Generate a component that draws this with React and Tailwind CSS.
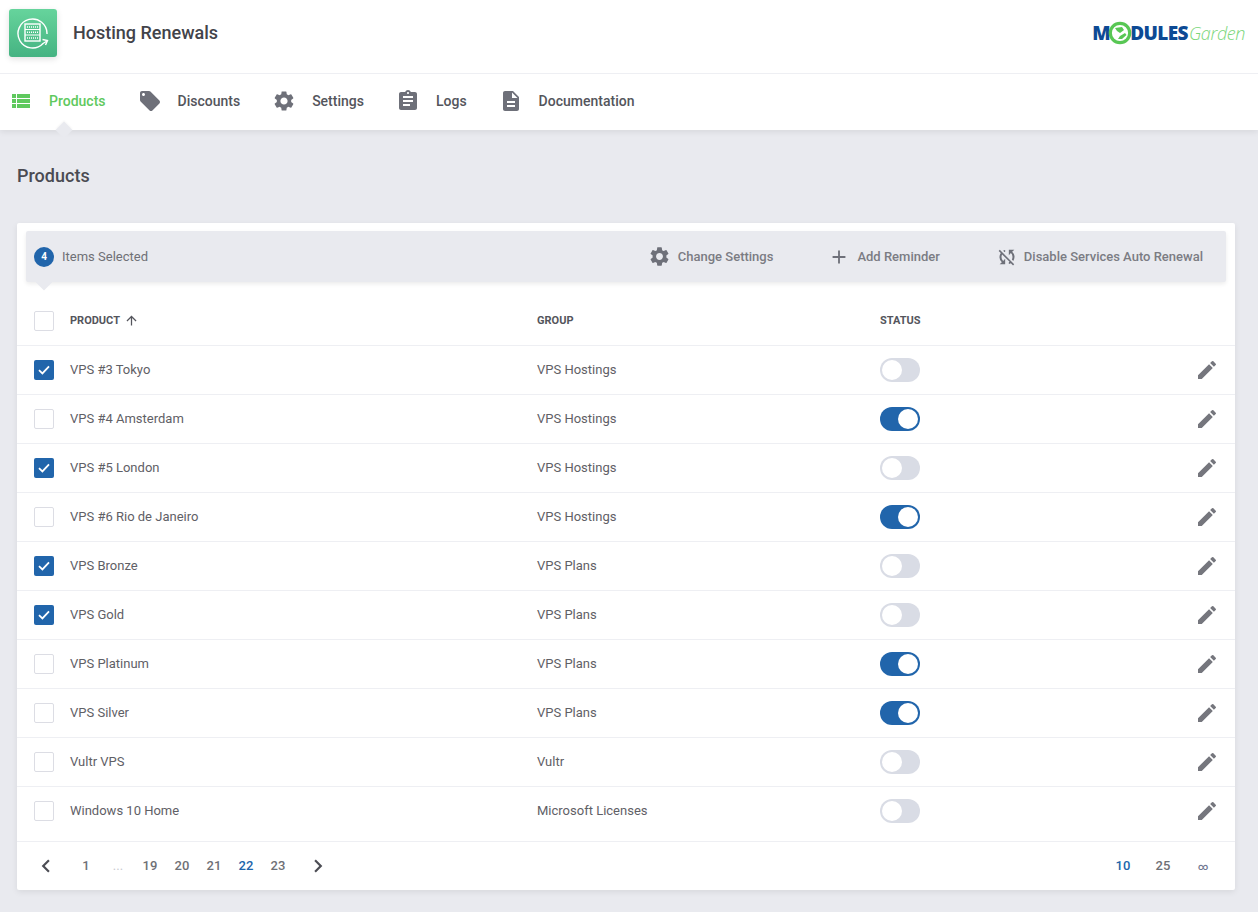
import { MdViewList, MdLocalOffer, MdSettings, MdAssignment, MdDescription, MdEdit, MdSyncDisabled, MdAdd, MdArrowUpward, MdChevronLeft, MdChevronRight } from 'react-icons/md'

const tabs = [
  { label: 'Products', icon: MdViewList, active: true },
  { label: 'Discounts', icon: MdLocalOffer },
  { label: 'Settings', icon: MdSettings },
  { label: 'Logs', icon: MdAssignment },
  { label: 'Documentation', icon: MdDescription },
]

const rows = [
  ['VPS #3 Tokyo', 'VPS Hostings', true, false],
  ['VPS #4 Amsterdam', 'VPS Hostings', false, true],
  ['VPS #5 London', 'VPS Hostings', true, false],
  ['VPS #6 Rio de Janeiro', 'VPS Hostings', false, true],
  ['VPS Bronze', 'VPS Plans', true, false],
  ['VPS Gold', 'VPS Plans', true, false],
  ['VPS Platinum', 'VPS Plans', false, true],
  ['VPS Silver', 'VPS Plans', false, true],
  ['Vultr VPS', 'Vultr', false, false],
  ['Windows 10 Home', 'Microsoft Licenses', false, false],
]

function AppIcon() {
  return (
    <div className="flex h-12 w-12 items-center justify-center rounded-[3px] bg-gradient-to-b from-[#66d49c] to-[#45b382] shadow-[0_2px_6px_rgba(0,0,0,0.12)]">
      <svg width="34" height="34" viewBox="0 0 34 34" fill="none" stroke="#fff">
        <path d="M31 18 A14.5 14.5 0 1 0 27 27.5 L31 25" strokeWidth="1.4" />
        <path d="M26.5 23.5 L31.5 24.5 L29.5 29" strokeWidth="1.4" />
        <rect x="9" y="8" width="15" height="17" strokeWidth="1.4" />
        <path d="M9 13.5 H24 M9 19 H24" strokeWidth="1.2" />
        <path d="M11 11 H22 M11 16.2 H22 M11 22 H22" strokeWidth="1.4" strokeDasharray="1 1" />
      </svg>
    </div>
  )
}

function Logo() {
  return (
    <div className="flex items-center pb-[7px] font-['Open_Sans',sans-serif] text-[19px] leading-none">
      <span className="font-extrabold tracking-[-0.5px] text-[#0d4a94]">M</span>
      <svg width="24" height="24" viewBox="0 0 24 24" className="mx-[-2px]">
        <circle cx="12" cy="12" r="9.7" fill="#fff" stroke="#58c754" strokeWidth="3.2" />
        <path d="M7 7 L14 6 L16 9 L12 12 L9 10 Z M12 15 L17 12 L18.5 14 L14 18 L10 18 Z" fill="#58c754" />
      </svg>
      <span className="font-extrabold tracking-[-0.6px] text-[#0d4a94]">DULES</span>
      <span className="ml-px text-[18px] font-light italic tracking-[-0.4px] text-[#7bd67a]">Garden</span>
    </div>
  )
}

function Checkbox({ checked }) {
  if (checked) {
    return (
      <div className="flex h-5 w-5 items-center justify-center rounded-[2px] bg-[#2165ab]">
        <svg width="12" height="10" viewBox="0 0 12 10" fill="none" stroke="#fff" strokeWidth="1.8">
          <path d="M1 5.2 L4.4 8.4 L11 1.4" />
        </svg>
      </div>
    )
  }
  return <div className="h-5 w-5 rounded-[2px] border border-[#dcdde4] bg-white" />
}

function Toggle({ on }) {
  return (
    <div className={`flex h-6 w-10 items-center rounded-full p-0.5 ${on ? 'justify-end bg-[#2165ab]' : 'justify-start bg-[#d9dce5]'}`}>
      <div className="h-5 w-5 rounded-full bg-white" />
    </div>
  )
}

function PageNum({ children, className = 'text-[#6f7076]' }) {
  return <span className={`w-8 text-center ${className}`}>{children}</span>
}

export default function App() {
  return (
    <div className="min-h-[912px] bg-[#e9eaef] pb-[21px] font-['Roboto',sans-serif] text-[13px] text-[#5f6066]">
      <header className="bg-white shadow-[0_2px_6px_rgba(0,0,0,0.08)]">
        <div className="flex h-[74px] items-center justify-between border-b border-[#eeeff3] pr-[13px] pl-[9px]">
          <div className="flex items-center pb-[8px]">
            <AppIcon />
            <h1 className="ml-4 text-lg font-medium text-[#42434a]">Hosting Renewals</h1>
          </div>
          <Logo />
        </div>
        <nav className="flex h-14 items-center pl-[9px]">
          {tabs.map(({ label, icon: Icon, active }) => (
            <div key={label} className={`relative mr-8 flex h-full items-center gap-4 pb-[3px] text-sm font-medium ${active ? 'text-[#5fc95e]' : 'text-[#54555c]'}`}>
              <Icon size={24} className={active ? 'text-[#5fc95e]' : 'text-[#6e7079]'} />
              <span>{label}</span>
              {active && <div className="absolute bottom-[-6px] left-[49px] h-3 w-3 rotate-45 bg-[#e9eaef] shadow-[-1px_-1px_2px_rgba(0,0,0,0.03)]" />}
            </div>
          ))}
        </nav>
      </header>

      <main className="px-[17px] pr-[23px]">
        <h2 className="mt-[35px] mb-[36px] text-lg leading-[22px] font-medium text-[#4a4b52]">Products</h2>

        <section className="rounded-[2px] bg-white p-0 shadow-[0_2px_6px_rgba(0,0,0,0.08)]">
          <div className="px-[9px] pt-2">
            <div className="relative flex h-[51px] items-center justify-between rounded-[2px] bg-[#e9eaef] pr-[23px] pl-2 shadow-[0_2px_4px_rgba(0,0,0,0.08)]">
              <div className="flex items-center gap-[8px]">
                <span className="flex h-5 w-5 items-center justify-center rounded-full bg-[#2165ab] text-[10px] font-bold text-white">4</span>
                <span className="text-[#6f7076]">Items Selected</span>
              </div>
              <div className="flex items-center text-[13px] font-medium text-[#7b7c83]">
                <div className="flex items-center gap-[7px]"><MdSettings size={23} className="text-[#6e7079]" />Change Settings</div>
                <div className="ml-[55px] flex items-center gap-[7px]"><MdAdd size={22} className="text-[#6e7079]" />Add Reminder</div>
                <div className="ml-[56px] flex items-center gap-[6px]"><MdSyncDisabled size={22} className="text-[#6e7079]" />Disable Services Auto Renewal</div>
              </div>
              <div className="absolute bottom-[-6px] left-[12px] h-3 w-3 rotate-45 bg-[#e9eaef]" />
            </div>
          </div>

          <div className="flex h-[64px] items-center border-b border-[#eeeff3] pt-[14px] pl-[17px] text-[11px] leading-[15px] font-bold text-[#54555c]">
            <div className="flex w-[503px] items-center">
              <Checkbox />
              <span className="ml-4">PRODUCT</span>
              <MdArrowUpward size={15} className="ml-[4px] text-[#54555c]" />
            </div>
            <div className="w-[343px]">GROUP</div>
            <div>STATUS</div>
          </div>

          {rows.map(([name, group, checked, on], i) => (
            <div key={name} className={`flex items-center border-b border-[#eeeff3] pr-4 pl-[17px] ${i === rows.length - 1 ? 'h-[55px] pb-[6px]' : 'h-[49px]'}`}>
              <div className="flex w-[503px] items-center">
                <Checkbox checked={checked} />
                <span className="ml-4">{name}</span>
              </div>
              <div className="w-[343px]">{group}</div>
              <Toggle on={on} />
              <MdEdit size={24} className="ml-auto text-[#75767d]" />
            </div>
          ))}

          <div className="flex h-[48px] items-center justify-between pr-[12px] pl-[17px] font-medium">
            <div className="flex items-center">
              <MdChevronLeft size={26} className="ml-[-1px] text-[#4c4d54]" />
              <div className="ml-[11px] flex items-center">
                <PageNum>1</PageNum>
                <PageNum className="font-normal text-[#c9cad0]">...</PageNum>
                <PageNum>19</PageNum>
                <PageNum>20</PageNum>
                <PageNum>21</PageNum>
                <PageNum className="text-[#2165ab]">22</PageNum>
                <PageNum>23</PageNum>
              </div>
              <MdChevronRight size={26} className="ml-[11px] text-[#4c4d54]" />
            </div>
            <div className="flex items-center">
              <span className="w-10 text-center text-[#2165ab]">10</span>
              <span className="w-10 text-center text-[#6f7076]">25</span>
              <span className="w-10 text-center text-[10px] text-[#6f7690]">∞</span>
            </div>
          </div>
        </section>
      </main>
    </div>
  )
}
